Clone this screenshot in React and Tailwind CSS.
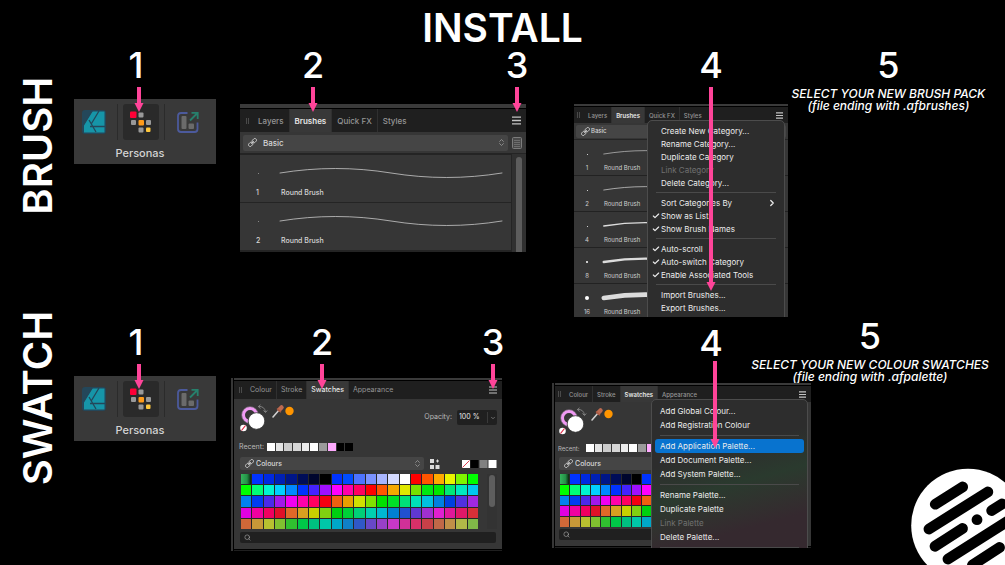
import React from 'react';
import { ChevronDown, ChevronRight, ChevronsUpDown, Search, Check } from 'lucide-react';
import clsx from 'clsx';

const PALETTE = [
  '22b14c 0033ff 0029e0 0020b4 001688 000d58 00062e 000000 0033ff 004dff 4d73ff 7a92ff a8b5ff d4daff ffffff ff0000 ff5500 ffaa00 eaf500 80f500 00ff00',
  '00ff00 00ff77 00f5d0 00d0ff 0088ff 0033ff 4422ff a010ff ff00ff ff00aa ff0060 ff0000 ff5500 f5a800 e0e800 77e000 00e810 00e800 00e878 00e8c0 00c8f0',
  '0080f0 003df0 4a2aea a018ea f000f0 ff00aa ff0060 f50010 f06010 e8a000 d0e000 80e000 00e000 00e028 00e078 00e0b8 00c0e0 0080e0 0040e0 5030e0 a028e0',
  'e000e0 f000a0 f00060 e01028 e06828 d8a020 c8d000 80d010 00d010 00d038 00d078 00d0b0 00b8d0 0080d0 2050d0 6038d0 a030d0 e020d0 e0189a e01868 d83038',
  'd06838 c89838 b8c030 80c030 30c030 00c848 00c080 00c8a8 00a8c8 1080c8 3058c8 6848c8 9840c8 c838c8 d03098 d83068 c84048 c06848 c09048 b0b848 80b848',
].flatMap((row) => row.split(' ').map((c) => `#${c}`));

const RECENT = ['#ffffff', '#e3e3e3', '#cccccc', '#d6d6d6', '#ececec', '#ffffff', '#9b9b9b', '#ffaaff', '#000000', '#000000'];

const BRUSH_MENU = [
  { label: 'Create New Category...' },
  { label: 'Rename Category...' },
  { label: 'Duplicate Category' },
  { label: 'Link Category', disabled: true },
  { label: 'Delete Category...' },
  null,
  { label: 'Sort Categories By', submenu: true },
  { label: 'Show as List', checked: true },
  { label: 'Show Brush Names', checked: true },
  null,
  { label: 'Auto-scroll', checked: true },
  { label: 'Auto-switch Category', checked: true },
  { label: 'Enable Associated Tools', checked: true },
  null,
  { label: 'Import Brushes...' },
  { label: 'Export Brushes...' },
];

const PALETTE_MENU = [
  { label: 'Add Global Colour...' },
  { label: 'Add Registration Colour' },
  null,
  { label: 'Add Application Palette...', active: true },
  { label: 'Add Document Palette...' },
  { label: 'Add System Palette...' },
  null,
  { label: 'Rename Palette...' },
  { label: 'Duplicate Palette' },
  { label: 'Link Palette', disabled: true },
  { label: 'Delete Palette...' },
  null,
];

const Arrow = ({ length, className }) => (
  <svg width="10" height={length} className={clsx('absolute z-20', className)} fill="#ff4499" aria-hidden="true">
    <rect x="3" y="0" width="4" height={length - 8} />
    <path d={`M0.5 ${length - 9}H9.5L5 ${length}Z`} />
  </svg>
);

const Step = ({ n, length, arrow = 'top-10 left-[15px]' }) => (
  <div className="relative w-10 text-center text-4xl leading-9 font-medium">
    {n}
    {length && <Arrow length={length} className={arrow} />}
  </div>
);

const RowLabel = ({ children }) => (
  <h2 className="rotate-180 justify-self-start self-start text-[40px] leading-10 font-semibold [writing-mode:vertical-rl]">
    {children}
  </h2>
);

const Note = ({ title, file }) => (
  <p className="text-center text-xs leading-3 font-medium italic whitespace-nowrap">
    {title}
    <br />
    {file}
  </p>
);

const DesignerIcon = () => (
  <svg viewBox="0 0 24 24" className="size-6">
    <rect x="0" y="0" width="24" height="24" rx="3" fill="#24475a" />
    <path d="M10 1.500H22.500V22.500H2V14.500Z" fill="#1695a8" />
    <path d="M1 16L10.500 0.500M7 10L14 22M8 16.500H23M9.500 13.500L17 1" stroke="#24475a" strokeWidth="1.300" fill="none" />
  </svg>
);

const PixelIcon = () => (
  <svg viewBox="0 0 24 24" className="size-6">
    <rect x="1" y="1.500" width="6.500" height="6.500" rx="1" fill="#ff0037" />
    <rect x="9.500" y="2.500" width="5" height="5" rx="1" fill="#999" />
    <rect x="2" y="10" width="5" height="5" rx="1" fill="#999" />
    <rect x="9.500" y="10" width="5.500" height="5.500" rx="1" fill="#ff9b1a" />
    <rect x="17" y="10" width="5" height="5" rx="1" fill="#999" />
    <rect x="9.500" y="17.500" width="5" height="5" rx="1" fill="#999" />
    <rect x="17" y="17.500" width="4.500" height="4.500" rx="1" fill="#ffc83c" />
  </svg>
);

const ExportIcon = () => (
  <svg viewBox="0 0 24 24" className="size-6" fill="none">
    <path d="M11.500 3H5Q2 3 2 6V19Q2 22 5 22H18.500Q21.500 22 21.500 19V12.500" stroke="#4c5a9c" strokeWidth="1.800" />
    <rect x="5.500" y="6" width="5" height="13" rx="1" fill="#6b6b6b" />
    <rect x="12.500" y="13.500" width="5.500" height="5.500" rx="1" fill="#6b6b6b" />
    <path d="M14 10.500L21 3.500M15.500 2.800H21.700V9" stroke="#27806c" strokeWidth="1.800" />
  </svg>
);

const ChainIcon = ({ className }) => (
  <svg viewBox="0 0 12 12" className={className} fill="none" stroke="#d0d0d0" strokeWidth="1.200">
    <g transform="rotate(-45 6 6)">
      <rect x="-0.500" y="3.800" width="6" height="4.400" rx="1.600" />
      <rect x="6.500" y="3.800" width="6" height="4.400" rx="1.600" />
      <path d="M3.500 6H8.500" />
    </g>
  </svg>
);

const Personas = () => (
  <div className="h-[65px] bg-[#393939] pt-[5px] pl-[2px]">
    <div className="flex w-[130px] gap-[5px]">
      <button aria-label="Designer" className="flex h-9 w-9 items-center justify-center"><DesignerIcon /></button>
      <span className="w-px bg-[#2b2b2b]" />
      <button aria-label="Pixel" className="flex h-9 w-9 items-center justify-center rounded-[3px] bg-[#2a2a2a]"><PixelIcon /></button>
      <span className="w-px bg-[#2b2b2b]" />
      <button aria-label="Export" className="flex h-9 w-9 items-center justify-center"><ExportIcon /></button>
    </div>
    <p className="mt-[5px] w-32 text-center text-[11px] leading-4 font-medium text-[#d4d4d4]">Personas</p>
  </div>
);

const MenuIcon = ({ className }) => (
  <svg viewBox="0 0 8 8" className={className} stroke="#c4c4c4" strokeWidth="1.200">
    <path d="M0 1H8M0 4H8M0 7H8" />
  </svg>
);

const TAB_SIZES = {
  sm: { bar: 'text-[6px] font-medium', grip: 'ml-[3px]', tab: 'px-1', icon: 'size-[7px]' },
  md: { bar: 'text-[7px]', grip: 'ml-[5px]', tab: 'px-1', icon: 'size-2' },
  lg: { bar: 'text-[8px] font-medium', grip: 'ml-1.5', tab: 'px-[5px]', icon: 'size-[9px]' },
};

const TabBar = ({ tabs, active, size }) => {
  const styles = TAB_SIZES[size];

  return (
    <div className={clsx('flex items-stretch bg-[#1f1f1f] text-[#969696]', styles.bar)}>
      <span className={clsx('mr-1 h-1.5 w-[3px] self-center border-x border-[#4a4a4a]', styles.grip)} />
      {tabs.map((tab) => (
        <button
          key={tab}
          className={clsx(
            styles.tab,
            tab !== tabs[tabs.length - 1] && 'border-r border-[#303030]',
            tab === active && 'bg-[#383838] text-[#e6e6e6]',
            tab === active && (size === 'md' ? 'font-medium' : 'font-semibold'),
          )}
        >
          {tab}
        </button>
      ))}
      <button aria-label="Panel menu" className="mr-[5px] ml-auto self-center"><MenuIcon className={styles.icon} /></button>
    </div>
  );
};

const LinkedSelect = ({ value, className, text = 'pl-4 text-[7px]' }) => (
  <div className={clsx('relative flex items-center rounded-[2px] bg-[#454545]', className)}>
    <ChainIcon className="absolute left-[5px] size-[9px]" />
    <select aria-label="Category" className={clsx('w-full appearance-none leading-3 font-medium text-[#d6d6d6]', text)}>
      <option>{value}</option>
    </select>
    <ChevronsUpDown className="absolute right-[2px] size-[9px] text-[#a0a0a0]" />
  </div>
);

const Wave = ({ width, className }) => (
  <svg viewBox="0 0 224 12" className={className} fill="none" stroke="#dcdcdc" strokeLinecap="round" strokeWidth={width}>
    <path d="M1 6C38 0 75 0 112 6S186 12 223 6" />
  </svg>
);

const BrushPanel = () => (
  <div className="flex h-[148px] flex-col overflow-hidden bg-[#363636]">
    <div className="h-[5px] shrink-0 border-b border-black bg-[#3a3a3a]" />
    <div className="grid h-[23px] shrink-0">
      <TabBar size="lg" tabs={['Layers', 'Brushes', 'Quick FX', 'Styles']} active="Brushes" />
    </div>
    <div className="flex h-[22px] shrink-0 items-center gap-1 border-b border-[#242424] pr-1 pl-[3px]">
      <LinkedSelect value="Basic" className="h-4 flex-1" text="pl-5 text-[8px]" />
      <svg viewBox="0 0 10 12" className="h-3 w-2.5" fill="#4a4a4a" stroke="#7c7c7c">
        <rect x="0.500" y="0.500" width="9" height="11" rx="1" />
        <path d="M2 3.500H8M2 5.500H8M2 7.500H8M2 9.500H8" strokeWidth="0.700" />
      </svg>
    </div>
    <div className="flex flex-1 bg-[#242424]">
      <div className="flex-1">
        {[1, 2].map((n) => (
          <div key={n} className="mt-px h-[47px] bg-[#363636] pr-2 pl-4 text-[7px] font-medium text-[#d6d6d6]">
            <div className="flex items-center pt-3">
              <span className="mr-5 ml-[2px] h-px w-px bg-[#888]" />
              <Wave width="0.7" className="h-3 flex-1" />
            </div>
            <div className="mt-[7px] flex leading-[14px]">
              <span className="w-[25px]">{n}</span>
              <span>Round Brush</span>
            </div>
          </div>
        ))}
      </div>
      <div className="ml-px w-[14px] bg-[#303030] pt-[3px]">
        <div className="mx-auto h-28 w-[6px] rounded-full bg-[#5c5c5c]" />
      </div>
    </div>
  </div>
);

const Menu = ({ items, roomy, className }) => (
  <ul className={clsx('absolute z-10 rounded-t-[5px] border border-[#4c4c4c] text-[#ececec]', className)}>
    {items.map((item, i) =>
      item ? (
        <li key={item.label}>
          <button
            disabled={item.disabled}
            className={clsx(
              'relative flex w-full items-center rounded-[3px] text-left text-[8px] whitespace-nowrap',
              roomy ? 'h-[14px] pl-[5px]' : 'h-[13px] pl-2.5',
              item.active && 'bg-[#0873cf]',
              item.disabled && 'text-[#707070]',
            )}
          >
            {item.checked && <Check className="absolute left-px size-2" strokeWidth={3.5} />}
            {item.label}
            {item.submenu && <ChevronRight className="mr-1 ml-auto size-2.5" strokeWidth={3} />}
          </button>
        </li>
      ) : (
        <li key={i} className="mx-[5px] my-[3px] h-px bg-[#4a4a4a]" />
      ),
    )}
  </ul>
);

const BrushMenuPanel = () => (
  <div className="relative h-[213px] overflow-hidden bg-[#363636]">
    <div className="h-[3px] border-b border-black bg-[#3a3a3a]" />
    <div className="grid h-4">
      <TabBar size="sm" tabs={['Layers', 'Brushes', 'Quick FX', 'Styles']} active="Brushes" />
    </div>
    <div className="flex h-[17px] items-center border-b border-[#242424] px-[2px]">
      <LinkedSelect value="Basic" className="h-[13px] flex-1" text="pl-[15px] text-[6px]" />
    </div>
    {[[1, 0.8], [2, 0.9], [4, 1.8], [8, 3.2], [16, 6]].map(([n, width]) => (
      <div key={n} className="h-9 border-b border-[#222] pr-4 text-[6px] text-[#cfcfcf]">
        <div className="flex items-center pt-2">
          <span className="flex w-[29px] justify-center pr-[3px]">
            <span className="rounded-full bg-white" style={{ width: Math.max(n / 4, 0.5), height: Math.max(n / 4, 0.5) }} />
          </span>
          <Wave width={width} className="h-3 w-[168px] overflow-visible" />
        </div>
        <div className="mt-[2px] flex leading-3">
          <span className="w-[26px] text-center">{n}</span>
          <span className="pl-1">Round Brush</span>
        </div>
      </div>
    ))}
    <Menu items={BRUSH_MENU} className="top-4 right-[3px] w-[138px] bg-[#2d2d2d] px-[3px] pt-[3px] pb-2" />
  </div>
);

const ColourWells = () => (
  <svg viewBox="0 0 58 30" className="h-[30px] w-[58px]" fill="none">
    <circle cx="10" cy="11" r="6.500" stroke="#f09af4" strokeWidth="3" />
    <circle cx="10" cy="11" r="8.300" stroke="#d8b0da" strokeWidth="0.400" />
    <circle cx="16.500" cy="17" r="8.300" fill="#fff" stroke="#333" strokeWidth="0.800" />
    <circle cx="3.500" cy="24" r="3.300" fill="#fff" />
    <path d="M1.500 26.500L5.500 21.500" stroke="#e02040" strokeWidth="1.200" />
    <path d="M18.500 2.500Q24.500 2 25.500 8M20.500 0.800L18.300 2.600L20.500 4.500M23.500 6.500L25.500 8.500L27.200 6.500" stroke="#909090" strokeWidth="0.800" />
    <path d="M33 13L39.500 5.500" stroke="#cfcfcf" strokeWidth="1.600" strokeLinecap="round" />
    <path d="M39.500 5.500L41.500 3.500" stroke="#bd6a50" strokeWidth="4.500" strokeLinecap="round" />
    <path d="M37 4.500L41 8.300" stroke="#a85a44" strokeWidth="1.300" />
    <circle cx="49.500" cy="7" r="4.200" fill="#ff9500" />
  </svg>
);

const SwatchPanel = ({ compact, children }) => (
  <div className={clsx('relative flex overflow-hidden bg-[#363636]', compact ? 'h-[165px]' : 'h-[173px]')}>
    <div className="w-[3px] shrink-0 border-r border-black" />
    <div className="min-w-0 flex-1">
      <div className="h-[3px] border-b border-black bg-[#3a3a3a]" />
      <div className={clsx('grid', compact ? 'h-4' : 'h-[18px]')}>
        <TabBar size={compact ? 'sm' : 'md'} tabs={['Colour', 'Stroke', 'Swatches', 'Appearance']} active="Swatches" />
      </div>
      <div className={clsx('flex items-start justify-between pt-[5px] pr-[5px]', compact ? 'h-[42px] pl-1' : 'h-11 pl-1.5')}>
        <ColourWells />
        {!compact && (
          <label className="mt-1.5 flex items-center gap-[5px] text-[7px] text-[#b8b8b8]">
            Opacity:
            <span className="flex h-[15px] w-10 items-center rounded-[2px] bg-[#202020]">
              <input defaultValue="100 %" className="w-[31px] border-r border-[#3a3a3a] pl-[2px] text-[#e8e8e8]" />
              <ChevronDown className="mx-auto size-[6px]" />
            </span>
          </label>
        )}
      </div>
      <div className={clsx('flex h-2 items-center text-[#b8b8b8]', compact ? 'pl-[3px] text-[6px]' : 'pl-[5px] text-[7px]')}>
        <span className="w-7">Recent:</span>
        <div className="grid w-[86px] grid-cols-10 gap-px">
          {RECENT.map((colour, i) => (
            <span key={i} className="h-2" style={{ background: colour }} />
          ))}
        </div>
      </div>
      <div className={clsx('flex items-center pr-[5px]', compact ? 'mt-[5px] pl-1' : 'mt-1.5 pl-[6px]')}>
        <LinkedSelect value="Colours" className="mr-1.5 h-[13px] flex-1" />
        <svg viewBox="0 0 10 10" className="mr-[22px] size-2.5" fill="#dcdcdc">
          <rect x="0" y="0" width="4" height="4" />
          <rect x="0" y="6" width="4" height="4" />
          <rect x="5.500" y="6" width="4" height="4" />
          <path d="M7 0.500H8V1.500H9V2.500H8V3.500H7V2.500H6V1.500H7Z" />
        </svg>
        <svg viewBox="0 0 35 9" className="h-[9px] w-[35px]">
          <rect x="0" y="1" width="8" height="8" fill="#fff" />
          <path d="M0.500 8.500L7.500 1.500" stroke="#e04050" />
          <rect x="8.500" y="1" width="8" height="8" fill="#000" />
          <rect x="17.500" y="1" width="8" height="8" fill="#808080" />
          <rect x="26.500" y="1" width="8" height="8" fill="#fff" />
        </svg>
      </div>
      <div className={clsx('mt-1 flex pr-[5px]', compact ? 'pl-[5px]' : 'pl-[7px]')}>
        <div className={clsx('grid flex-1 gap-px bg-[#272727]', compact ? 'mr-3 h-[53px]' : 'h-[55px]')} style={{ gridTemplateColumns: 'repeat(21, minmax(0, 1fr))' }}>
          {PALETTE.map((colour, i) => (
            <span key={i} style={{ background: i ? colour : 'linear-gradient(90deg, #34b45c, #259147 60%, #08260f)' }} />
          ))}
        </div>
        <div className="ml-[9px] w-2.5 bg-[#333] pt-px">
          <div className="mx-auto h-8 w-[6px] rounded-full bg-[#5e5e5e]" />
        </div>
      </div>
      <div className={clsx('relative mr-1.5 flex h-[11px] items-center rounded-[2px] bg-[#202020]', compact ? 'mt-[2px] ml-1' : 'mt-[3px] ml-1.5')}>
        <Search className="absolute left-1 size-[7px] text-[#b0b0b0]" />
        <input type="search" aria-label="Search swatches" className="w-full pl-4 text-[7px] text-white" />
      </div>
      <div className="mt-1.5 h-[3px] border-t border-black bg-[#1f1f1f]" />
    </div>
    {children}
  </div>
);

const Logo = () => (
  <svg viewBox="911 468 94 97" className="absolute right-0 bottom-0 h-[97px] w-[94px]" aria-label="Logo">
    <circle cx="968" cy="525.500" r="56.800" fill="#fff" />
    <g stroke="#000" strokeWidth="10.800" strokeLinecap="round">
      <path d="M935.300 504.200L962.600 487" />
      <path d="M929 529L987.800 492" />
      <path d="M991.700 510.500L1002 504" />
      <path d="M977 519.700H977.010" />
      <path d="M935 546.300L962.500 528.500" />
      <path d="M948 559L1012 518.500" />
      <path d="M972.500 565L999.500 547.500" />
    </g>
  </svg>
);

const App = () => (
  <main className="relative min-h-screen overflow-hidden bg-black font-['Inter','Liberation_Sans',sans-serif] text-white">
    <h1 className="h-[47px] pt-2 text-center text-[39px] leading-10 font-semibold">INSTALL</h1>

    <section className="grid grid-cols-[minmax(0,74fr)_minmax(0,166fr)_minmax(0,334fr)_minmax(0,214fr)_minmax(0,217fr)]">
      <div className="pt-[30px] pl-[18px]"><RowLabel>BRUSH</RowLabel></div>
      <div className="pr-6">
        <div className="flex h-[52px] pl-[42px]"><Step n={1} length={25} arrow="top-10 left-[18px]" /></div>
        <Personas />
      </div>
      <div className="pr-12">
        <div className="-mr-[11px] flex h-[57px] justify-between pl-[53px]">
          <Step n={2} length={25} />
          <Step n={3} length={25} />
        </div>
        <BrushPanel />
      </div>
      <div>
        <div className="flex h-[57px] pl-[117px]"><Step n={4} length={204} /></div>
        <BrushMenuPanel />
      </div>
      <div className="flex flex-col items-center pr-4">
        <div className="h-[41px]"><Step n={5} /></div>
        <Note title="SELECT YOUR NEW BRUSH PACK" file="(file ending with .afbrushes)" />
      </div>
    </section>

    <section className="-mt-2 grid grid-cols-[minmax(0,74fr)_minmax(0,157fr)_minmax(0,321fr)_minmax(0,259fr)_minmax(0,194fr)]">
      <div className="pt-[2px] pl-[18px]"><RowLabel>SWATCH</RowLabel></div>
      <div className="pt-[15px] pr-[15px]">
        <div className="flex h-[52px] pl-[42px]"><Step n={1} length={25} arrow="top-10 left-[18px]" /></div>
        <Personas />
      </div>
      <div className="pt-[15px] pr-[50px]">
        <div className="-mr-[11px] flex h-[54px] justify-between pl-[71px]">
          <Step n={2} length={25} />
          <Step n={3} length={25} />
        </div>
        <SwatchPanel />
      </div>
      <div className="pt-4">
        <div className="flex h-[58px] pl-[139px]"><Step n={4} length={87} arrow="top-9 left-[19px]" /></div>
        <SwatchPanel compact>
          <Menu
            roomy
            items={PALETTE_MENU}
            className="top-4 right-[3px] w-[157px] bg-[#2d2d2d] bg-linear-165 from-[#2d2d2d] from-35% via-[#2a3a2e] via-55% to-[#35292f] to-80% px-[3px] pt-1"
          />
        </SwatchPanel>
      </div>
      <div className="-ml-[58px] flex w-[234px] flex-col items-center pt-[9px]">
        <div className="h-[41px]"><Step n={5} /></div>
        <Note title="SELECT YOUR NEW COLOUR SWATCHES" file="(file ending with .afpalette)" />
      </div>
    </section>

    <Logo />
  </main>
);

export default App;
